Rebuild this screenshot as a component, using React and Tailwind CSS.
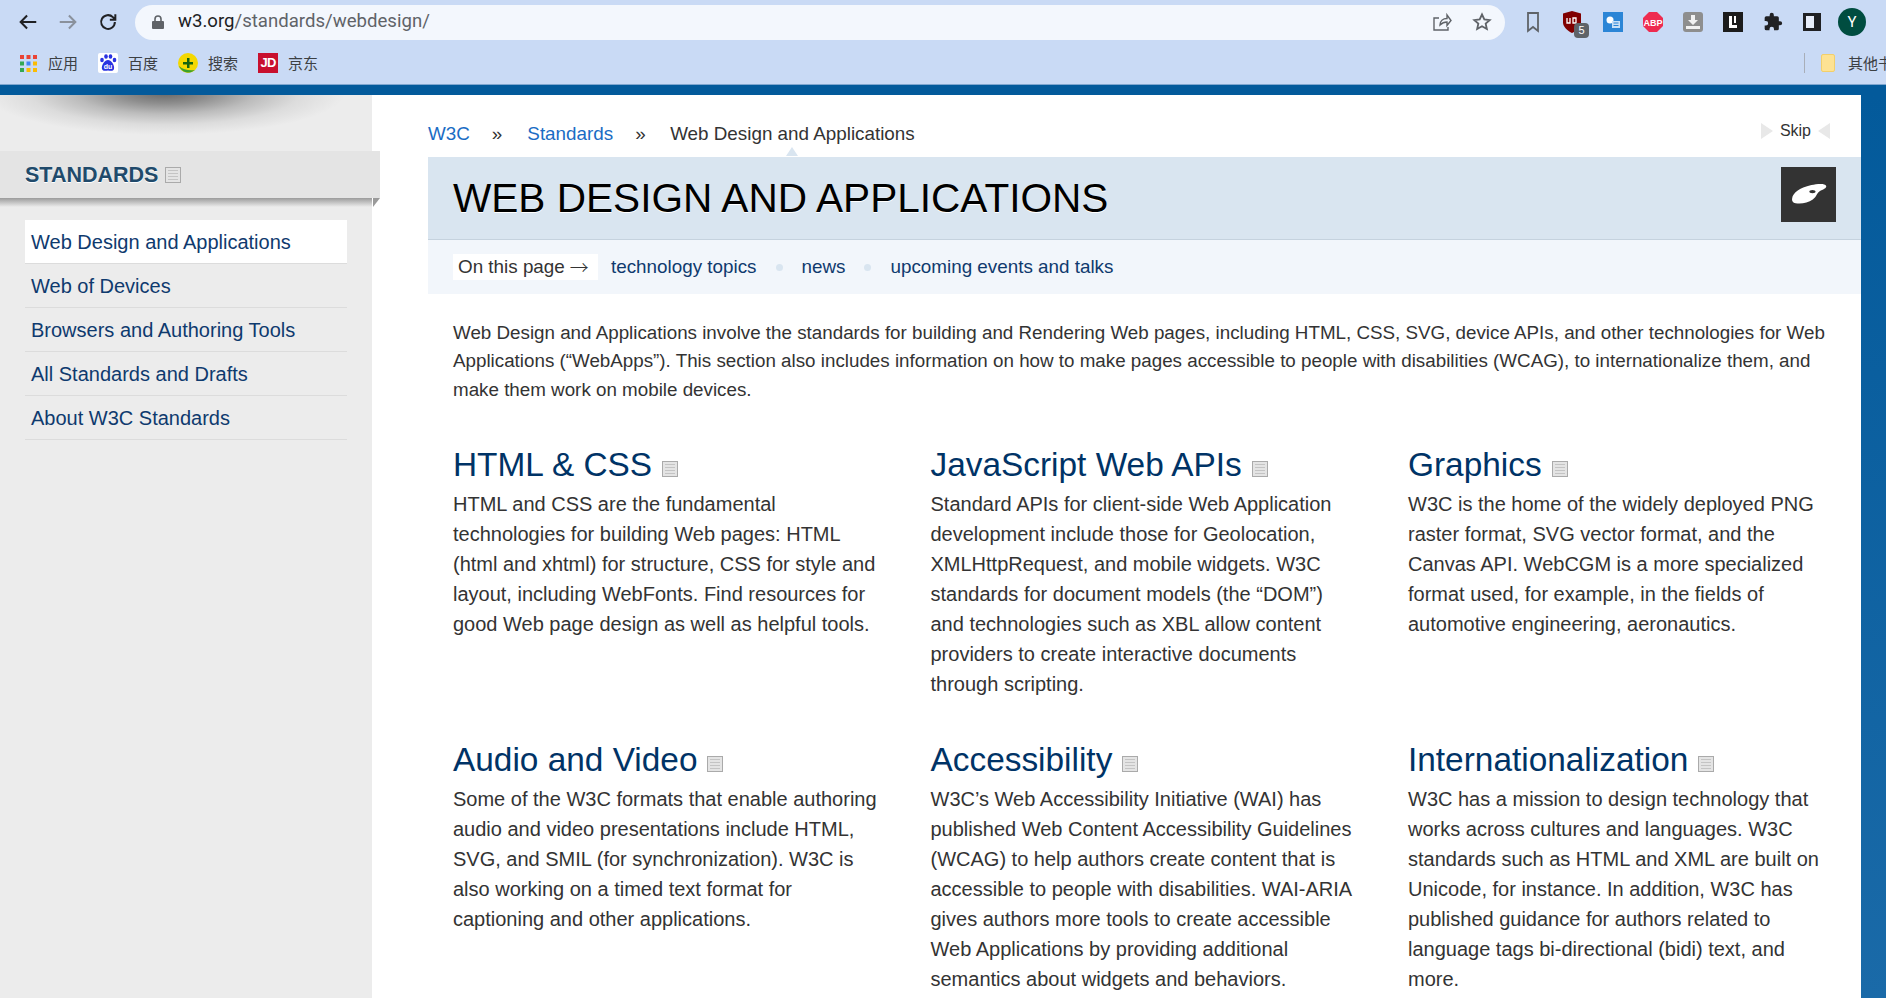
import React from "react";

const CJK = '"Noto Sans CJK SC","Liberation Sans",sans-serif';

function DocIcon({ className = "" }) {
  return (
    <span className={"inline-flex w-[16px] h-[16px] border border-[#aaaaaa] bg-[#e4e4e4] flex-col justify-center gap-[2px] px-[2px] align-middle " + className}>
      <span className="block h-px bg-[#c4c4c4]" />
      <span className="block h-px bg-[#c4c4c4]" />
      <span className="block h-px bg-[#c4c4c4]" />
      <span className="block h-px bg-[#c4c4c4]" />
    </span>
  );
}

function Bookmark({ icon, label }) {
  return (
    <div className="flex items-center gap-[10px]">
      <span className="w-[20px] h-[20px] flex items-center justify-center">{icon}</span>
      <span className="text-[15px] text-[#3c4043] font-['Noto_Sans_CJK_SC']">{label}</span>
    </div>
  );
}

function Chrome() {
  return (
    <div className="h-[85px] bg-[#c9daf5] shrink-0 border-b border-[#7fa6cf]">
      <div className="flex items-center h-[44px]">
        <div className="w-[135px] flex items-center pl-[17px] gap-[18px] shrink-0">
          <svg width="22" height="22" viewBox="0 0 24 24" fill="none" stroke="#202124" strokeWidth="2.2"><path d="M21 12H4M11 5l-7 7 7 7" /></svg>
          <svg width="22" height="22" viewBox="0 0 24 24" fill="none" stroke="#8a919c" strokeWidth="2.2"><path d="M3 12h17M13 5l7 7-7 7" /></svg>
          <svg width="22" height="22" viewBox="0 0 24 24" fill="none" stroke="#202124" strokeWidth="2.2"><path d="M19.500 12a7.500 7.500 0 1 1-2.200-5.300L20 9.500M20 3.500v6h-6" /></svg>
        </div>
        <div className="w-[1370px] h-[35px] rounded-full bg-[#f3f7fd] flex items-center pl-[16px] shrink-0">
          <svg width="14" height="16" viewBox="0 0 14 16" fill="#5f6368"><path d="M2 7h10a1 1 0 0 1 1 1v6a1 1 0 0 1-1 1H2a1 1 0 0 1-1-1V8a1 1 0 0 1 1-1z" /><path d="M4 7V5a3 3 0 0 1 6 0v2" fill="none" stroke="#5f6368" strokeWidth="1.6" /></svg>
          <span className="ml-[13px] text-[18.600px] text-[#202124] font-['Roboto']">w3.org<span className="text-[#5f6368]">/standards/webdesign/</span></span>
          <div className="ml-auto flex items-center gap-[20px] pr-[13px]">
            <svg width="20" height="20" viewBox="0 0 20 20" fill="none" stroke="#5f6368" strokeWidth="1.4"><path d="M8 13c0-4 3-6.500 7-6.500V3l4 5.500-4 5V10c-3 0-5 1-7 3zM7 6H2v12h14v-3" /></svg>
            <svg width="20" height="20" viewBox="0 0 24 24" fill="none" stroke="#5f6368" strokeWidth="2.2"><path d="M12 3l2.800 6 6.400.7-4.800 4.300 1.400 6.400L12 17.100l-5.800 3.300 1.400-6.400L2.800 9.700 9.200 9z" /></svg>
          </div>
        </div>
        <div className="flex items-center ml-[18px] gap-[20px]">
          <svg width="20" height="22" viewBox="0 0 20 22" fill="none" stroke="#5f6368" strokeWidth="1.800"><path d="M5 2h10v18l-5-4-5 4z" /></svg>
          <div className="relative w-[20px] h-[22px]">
            <svg width="18" height="22" viewBox="0 0 18 22"><path d="M9 0l9 2.500v9C18 16 13 20 9 22 5 20 0 16 0 11.500v-9z" fill="#800000" /><path d="M4 7v5h3V7M10 7h3v5h-3z" fill="none" stroke="#fff" strokeWidth="1.300" /></svg>
            <span className="absolute left-[11px] top-[12px] w-[15px] h-[15px] rounded-sm bg-[#5f6368] text-white text-[11px] leading-[15px] text-center font-['Liberation_Sans']">5</span>
          </div>
          <div className="w-[20px] h-[20px] bg-[#2b85d6] flex items-center justify-center">
            <svg width="16" height="14" viewBox="0 0 16 14"><circle cx="5" cy="5" r="3.500" fill="#fff" /><rect x="7" y="6" width="8" height="7" fill="#c8e0f6" /><path d="M8.500 8h5M8.500 10.500h5" stroke="#2b85d6" /></svg>
          </div>
          <svg width="20" height="20" viewBox="0 0 20 20"><path d="M6 0h8l6 6v8l-6 6H6l-6-6V6z" fill="#ee2b4f" /><text x="10" y="13.500" textAnchor="middle" fontSize="9" fontWeight="700" fill="#fff" fontFamily="Liberation Sans">ABP</text></svg>
          <div className="w-[20px] h-[20px] rounded-[3px] bg-[#8e8e8e] flex items-center justify-center">
            <svg width="16" height="16" viewBox="0 0 16 16" fill="#f2f2f2"><path d="M6 1h4v5h3l-5 5-5-5h3zM1 12h14v3H1z" /></svg>
          </div>
          <div className="w-[20px] h-[20px] bg-[#1c1c1c] flex items-center justify-center">
            <svg width="10" height="12" viewBox="0 0 10 12" fill="#fff"><path d="M1 0h3v9h5v3H1zM6 0h2v7H6z" /></svg>
          </div>
          <svg width="20" height="20" viewBox="0 0 24 24" fill="#202124"><path d="M20.500 11H19V7a2 2 0 0 0-2-2h-4V3.500a2.500 2.500 0 0 0-5 0V5H4a2 2 0 0 0-2 2v3.800h1.500a2.700 2.700 0 0 1 0 5.400H2V20a2 2 0 0 0 2 2h3.800v-1.500a2.700 2.700 0 0 1 5.400 0V22H17a2 2 0 0 0 2-2v-4h1.500a2.500 2.500 0 0 0 0-5z" /></svg>
          <div className="w-[18px] h-[18px] border-[3px] border-r-[7px] border-[#202124] bg-[#e8eefa]" />
          <div className="w-[28px] h-[28px] rounded-full bg-[#004d40] text-white text-[15px] flex items-center justify-center font-['Roboto'] -ml-[3px]">Y</div>
        </div>
      </div>
      <div className="flex items-center h-[40px] pl-[18px] relative -translate-y-[1px]" style={{ fontFamily: CJK }}>
        <div className="flex items-center gap-[20px]">
          <Bookmark label="应用" icon={
            <svg width="17" height="17" viewBox="0 0 17 17">
              <g fill="#ea4335"><rect width="4" height="4" /><rect x="6.500" width="4" height="4" /><rect x="13" width="4" height="4" /></g>
              <g><rect y="6.500" width="4" height="4" fill="#34a853" /><rect x="6.500" y="6.500" width="4" height="4" fill="#4285f4" /><rect x="13" y="6.500" width="4" height="4" fill="#fbbc04" /></g>
              <g><rect y="13" width="4" height="4" fill="#34a853" /><rect x="6.500" y="13" width="4" height="4" fill="#fbbc04" /><rect x="13" y="13" width="4" height="4" fill="#fbbc04" /></g>
            </svg>} />
          <Bookmark label="百度" icon={
            <svg width="20" height="20" viewBox="0 0 20 20"><rect width="20" height="20" rx="2" fill="#fff" /><g fill="#2932e1"><ellipse cx="4" cy="7" rx="1.800" ry="2.200" /><ellipse cx="8" cy="3.500" rx="1.800" ry="2.200" /><ellipse cx="12.500" cy="3.500" rx="1.800" ry="2.200" /><ellipse cx="16.500" cy="7" rx="1.800" ry="2.200" /><path d="M10 7c3 0 7 5 6 9-.5 2-3 2-6 1.500C7 18 4.500 18 4 16c-1-4 3-9 6-9z" /></g><text x="10" y="16" textAnchor="middle" fontSize="7" fontWeight="700" fill="#fff" fontFamily="Liberation Sans">du</text></svg>} />
          <Bookmark label="搜索" icon={
            <svg width="20" height="20" viewBox="0 0 20 20"><circle cx="10" cy="10" r="10" fill="#f4d800" /><path d="M1 13a10 10 0 0 0 16 4c-5 1-12 0-16-4z" fill="#3aa02c" /><path d="M9 5h2.500v4H15v2.500h-3.500V15H9v-3.500H5V9h4z" fill="#14640f" /></svg>} />
          <Bookmark label="京东" icon={
            <div className="w-[20px] h-[20px] bg-[#c8102e] text-white text-[13px] font-bold flex items-center justify-center font-['Liberation_Sans'] tracking-tighter">JD</div>} />
        </div>
        <div className="absolute left-[1804px] top-[9px] flex items-center whitespace-nowrap">
          <span className="w-px h-[20px] bg-[#a8aeb8]" />
          <span className="ml-[16px] w-[14px] h-[18px] bg-[#fde293] border border-[#f2cf6b] rounded-[2px]" />
          <span className="ml-[13px] text-[15px] text-[#3c4043]">其他书签</span>
        </div>
      </div>
    </div>
  );
}

function Sidebar() {
  const items = ["Web Design and Applications", "Web of Devices", "Browsers and Authoring Tools", "All Standards and Drafts", "About W3C Standards"];
  return (
    <aside className="w-[372px] shrink-0 bg-[#ececec] relative">
      <div className="h-[56px] bg-[radial-gradient(ellipse_180px_42px_at_165px_-2px,#686868_0%,#8e8e8e_25%,#bcbcbc_50%,#dcdcdc_75%,#ececec_100%)]" />
      <div className="relative w-[380px] h-[47px] bg-[#e4e4e4] flex items-center pl-[25px]">
        <h3 className="text-[21.500px] font-bold text-[#204a6b] [text-shadow:0_1px_0_#fff] leading-none translate-y-[1px]">STANDARDS</h3>
        <DocIcon className="ml-[7px]" />
        <span className="absolute left-0 top-full w-[372px] h-[9px] bg-[linear-gradient(180deg,#9b9b9b,#ececec)]" />
        <span className="absolute left-[373px] top-full w-0 h-0 border-t-[9px] border-t-[#9a9a9a] border-r-[7px] border-r-transparent" />
      </div>
      <ul className="mt-[22px] ml-[25px] w-[322px] text-[20px] text-[#0f3a6e]">
        {items.map((t, i) => (
          <li key={t} className={"h-[44px] pl-[6px] leading-[44px] border-b border-[#dcdcdc] " + (i === 0 ? "bg-white" : "")}>{t}</li>
        ))}
      </ul>
    </aside>
  );
}

function Section({ title, children }) {
  return (
    <section className="w-[426px] h-[295px]">
      <h2 className="text-[33.400px] leading-[40px] text-[#003366] whitespace-nowrap">
        {title}<DocIcon className="ml-[10px] translate-y-[2px]" />
      </h2>
      <p className="mt-[4px] text-[20px] leading-[30px] text-[#333333]">{children}</p>
    </section>
  );
}

export default function App() {
  return (
    <div className="w-[1886px] h-[998px] overflow-hidden flex flex-col font-['Liberation_Sans'] bg-white">
      <Chrome />
      <div className="h-[10px] bg-[#035a9b] shrink-0" />
      <div className="flex flex-1 min-h-0">
        <Sidebar />
        <main className="flex-1 pl-[56px] relative">
          <div className="h-[62px] flex items-center text-[18.840px] pt-[16px]">
            <a className="text-[#1a6cc4]">W3C</a>
            <span className="ml-[22px] text-[#333]">»</span>
            <a className="ml-[25px] text-[#1a6cc4]">Standards</a>
            <span className="ml-[22px] text-[#333]">»</span>
            <span className="ml-[24.500px] text-[#333]">Web Design and Applications</span>
            <span className="absolute left-[414px] top-[52px] w-0 h-0 border-x-[6px] border-x-transparent border-b-[9px] border-b-[#d9e5f0]" />
            <div className="ml-auto mr-[31px] flex items-center gap-[7px] text-[16px] text-[#333] -translate-y-[3px]">
              <span className="w-0 h-0 border-y-[8px] border-y-transparent border-l-[12px] border-l-[#e8e8e8]" />
              Skip
              <span className="w-0 h-0 border-y-[8px] border-y-transparent border-r-[12px] border-r-[#e8e8e8]" />
            </div>
          </div>
          <div className="h-[83px] bg-[#d9e5f0] border-b border-[#c5d2de] flex items-center pl-[25px] pr-[25px]">
            <h1 className="text-[40.600px] text-black leading-none [text-shadow:0_1px_0_#fff]">WEB DESIGN AND APPLICATIONS</h1>
            <div className="ml-auto w-[55px] h-[55px] -translate-y-[4px] bg-[#333333] flex items-center justify-center">
              <svg width="36" height="22" viewBox="0 0 102 64"><path d="M2 44C4 30 22 14 58 6c16-3 40-6 43 3 2 7-10 10-19 15-8 5-8 15-20 24-14 10-34 14-50 11C4 57 0 52 2 44z" fill="#fff" /><ellipse cx="61" cy="25" rx="9" ry="5" fill="#333" /></svg>
            </div>
          </div>
          <div className="h-[54px] bg-[#f2f6fb] flex items-center pl-[25px] text-[18.840px] text-[#0f3a6e]">
            <span className="bg-white text-[#333] pl-[5px] w-[145px] h-[26px] leading-[26px] whitespace-nowrap flex items-center">On this page<span className="ml-[5px] font-['Noto_Sans_CJK_SC'] font-light">→</span></span>
            <span className="ml-[13px]">technology topics</span>
            <span className="ml-[19px] w-[7px] h-[7px] rounded-full bg-[#d9e5f0]" />
            <span className="ml-[19px]">news</span>
            <span className="ml-[19px] w-[7px] h-[7px] rounded-full bg-[#d9e5f0]" />
            <span className="ml-[19px]">upcoming events and talks</span>
          </div>
          <div className="pl-[25px]">
            <p className="mt-[25px] w-[1378px] text-[18.800px] leading-[28.300px] text-[#333]">
              Web Design and Applications involve the standards for building and Rendering Web pages, including HTML, CSS, SVG, device APIs, and other technologies for Web Applications (“WebApps”). This section also includes information on how to make pages accessible to people with disabilities (WCAG), to internationalize them, and make them work on mobile devices.
            </p>
            <div className="mt-[41px] grid grid-cols-[477.500px_477.500px_426px]">
              <Section title="HTML & CSS">HTML and CSS are the fundamental technologies for building Web pages: HTML (html and xhtml) for structure, CSS for style and layout, including WebFonts. Find resources for good Web page design as well as helpful tools.</Section>
              <Section title="JavaScript Web APIs">Standard APIs for client-side Web Application development include those for Geolocation, XMLHttpRequest, and mobile widgets. W3C standards for document models (the “DOM”) and technologies such as XBL allow content providers to create interactive documents through scripting.</Section>
              <Section title="Graphics">W3C is the home of the widely deployed PNG raster format, SVG vector format, and the Canvas API. WebCGM is a more specialized format used, for example, in the fields of automotive engineering, aeronautics.</Section>
              <Section title="Audio and Video">Some of the W3C formats that enable authoring audio and video presentations include HTML, SVG, and SMIL (for synchronization). W3C is also working on a timed text format for captioning and other applications.</Section>
              <Section title="Accessibility">W3C’s Web Accessibility Initiative (WAI) has published Web Content Accessibility Guidelines (WCAG) to help authors create content that is accessible to people with disabilities. WAI-ARIA gives authors more tools to create accessible Web Applications by providing additional semantics about widgets and behaviors.</Section>
              <Section title="Internationalization">W3C has a mission to design technology that works across cultures and languages. W3C standards such as HTML and XML are built on Unicode, for instance. In addition, W3C has published guidance for authors related to language tags bi-directional (bidi) text, and more.</Section>
            </div>
          </div>
        </main>
        <div className="w-[25px] shrink-0 bg-[linear-gradient(180deg,#035a9b,#1a6aa8)]" />
      </div>
    </div>
  );
}
